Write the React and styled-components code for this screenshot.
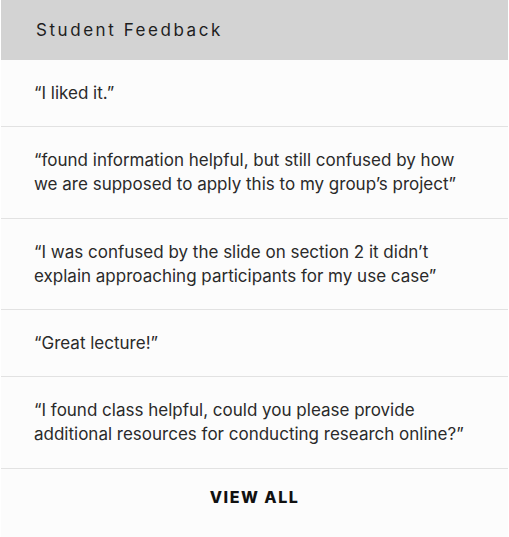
import styled, { createGlobalStyle } from "styled-components";

const GlobalStyle = createGlobalStyle`
    html, body {
        margin: 0;
        padding: 0;
        background: #ffffff;
    }
    body {
        font-family: "Inter", "Liberation Sans", sans-serif;
    }
`;

const Card = styled.div`
    width: 507px;
    height: 537px;
    margin-left: 1px;
    background-color: #fcfcfc;
    display: flex;
    flex-direction: column;
`;

const Header = styled.div`
    height: 60px;
    background-color: #d3d3d3;
    display: flex;
    align-items: center;
    padding: 0 35px;
    font-size: 17px;
    letter-spacing: 2.55px;
    color: #1e1e1e;
`;

const List = styled.div`
    display: flex;
    flex-direction: column;
`;

const Item = styled.div`
    padding: 21px 33px;
    font-size: 17px;
    line-height: 24.2px;
    color: #2a2a2a;
    border-bottom: 1px solid #e2e2e2;
`;

const Footer = styled.div`
    flex: 1;
    display: flex;
    justify-content: center;
    padding-top: 18px;
`;

const ViewAll = styled.button`
    border: none;
    background: none;
    padding: 0;
    font-family: inherit;
    font-size: 16px;
    font-weight: 800;
    letter-spacing: 1.5px;
    color: #111;
    height: 20px;
    cursor: pointer;
`;

const feedback = [
    "\u201cI liked it.\u201d",
    "\u201cfound information helpful, but still confused by how we are supposed to apply this to my group\u2019s project\u201d",
    "\u201cI was confused by the slide on section 2 it didn\u2019t explain approaching participants for my use case\u201d",
    "\u201cGreat lecture!\u201d",
    "\u201cI found class helpful, could you please provide additional resources for conducting research online?\u201d",
];

const App = () => {
    return (
        <>
            <GlobalStyle />
            <Card>
                <Header>Student Feedback</Header>
                <List>
                    {feedback.map((text, i) => (
                        <Item key={i}>{text}</Item>
                    ))}
                </List>
                <Footer>
                    <ViewAll>VIEW ALL</ViewAll>
                </Footer>
            </Card>
        </>
    );
};

export default App;
